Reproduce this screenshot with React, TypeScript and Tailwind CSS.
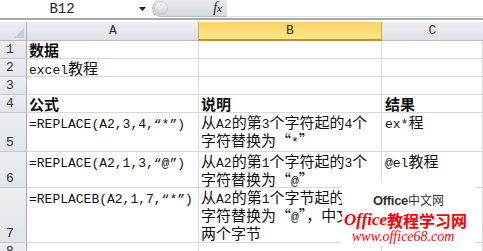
import React from "react";

const CJK = /([\u2E80-\u9FFF\u3000-\u303F\uFF00-\uFFEF\u201C\u201D]+)/;

// SimSun-like mix: half-width latin, full-width CJK
function Mix({ s, bold = false, mono = false }: { s: string; bold?: boolean; mono?: boolean }) {
  if (mono) return <span className="font-['Liberation_Mono',monospace] text-[13px] leading-none">{s}</span>;
  const parts = s.split(CJK).filter(Boolean);
  return (
    <>
      {parts.map((p, i) =>
        CJK.test(p) ? (
          <span
            key={i}
            className={
              "font-['Noto_Sans_CJK_SC',sans-serif] text-[15px] leading-none [font-feature-settings:'fwid'] " +
              (bold ? "font-bold" : "font-normal")
            }
          >
            {p}
          </span>
        ) : (
          <span key={i} className={"font-['Liberation_Mono',monospace] text-[13px] leading-none " + (bold ? "font-bold" : "")}>
            {p}
          </span>
        )
      )}
    </>
  );
}

type Row = { n: string; a?: string[]; b?: string[]; c?: string[]; bold?: boolean; monoA?: boolean };

const rows: Row[] = [
  { n: "1", a: ["数据"], bold: true },
  { n: "2", a: ["excel教程"] },
  { n: "3" },
  { n: "4", a: ["公式"], b: ["说明"], c: ["结果"], bold: true },
  { n: "5", a: ["=REPLACE(A2,3,4,“*”)"], b: ["从A2的第3个字符起的4个", "字符替换为“*”"], c: ["ex*程"], monoA: true },
  { n: "6", a: ["=REPLACE(A2,1,3,“@”)"], b: ["从A2的第1个字符起的3个", "字符替换为“@”"], c: ["@el教程"], monoA: true },
  { n: "7", a: ["=REPLACEB(A2,1,7,“*”)"], b: ["从A2的第1个字节起的7", "字符替换为“@”，中文占", "两个字节"], monoA: true },
  { n: "8" },
];

const cell = "border-r border-b border-[#d6d8da] bg-white pl-[2px] overflow-hidden text-[#111]";
const rowHead =
  "border-r border-b bg-gradient-to-b from-[#eceef1] to-[#e1e4e9] flex items-end pl-[6px] font-['Liberation_Mono',monospace] text-[13px] leading-[17px] text-[#333] overflow-hidden border-r-[#a7acb3] border-b-[#c5cad0]";

function Lines({ ls, bold, mono }: { ls?: string[]; bold?: boolean; mono?: boolean }) {
  return (
    <>
      {(ls || []).map((l, i) => (
        <div key={i} className="h-[18px] leading-[18px] text-[15px] font-['Noto_Sans_CJK_SC',sans-serif] whitespace-nowrap">
          <Mix s={l} bold={bold} mono={mono} />
        </div>
      ))}
    </>
  );
}

export default function App() {
  return (
    <div className="relative w-[483px] h-[251px] overflow-hidden bg-white flex flex-col">
      {/* formula bar */}
      <div className="h-[18px] flex items-start shrink-0">
        <div className="w-[124px] h-[18px] flex justify-center items-center font-['Liberation_Mono',monospace] text-[14px] text-[#222]">
          B12
        </div>
        <div className="w-[28px] h-[18px] flex items-center pl-[15px]">
          <svg width="7" height="4" viewBox="0 0 7 4">
            <polygon points="0,0 7,0 3.5,4" fill="#222" />
          </svg>
        </div>
        <div className="w-[75px] h-[17px] rounded-l-full bg-gradient-to-b from-[#e9ebee] to-[#d5d9de] border-l border-b border-[#b9bec5] flex items-center justify-between pr-[5px]">
          <div className="w-[14px] h-[14px] rounded-full bg-gradient-to-b from-[#f4f5f7] to-[#cfd3d8] border border-[#c4c8ce] ml-[1px] flex items-center justify-center">
            <div className="w-[6px] h-[2px] bg-[#e8eaed] rounded" />
          </div>
          <span className="font-['Liberation_Serif',serif] italic text-[14px] text-[#222] leading-none">
            f<span className="text-[11px]">x</span>
          </span>
        </div>
        <div className="flex-1 h-[17px] bg-white border-b border-[#e2e4e7]" />
      </div>
      <div className="h-[2px] bg-[#a3a9b1] shrink-0" />
      <div className="h-[2px] bg-white shrink-0" />

      {/* sheet */}
      <div className="grid grid-cols-[27px_172px_183px_1fr] grid-rows-[19px_18px_18px_18px_18px_39px_36px_55px_1fr] flex-1">
        {/* header row */}
        <div className="border-r border-b border-[#a7acb3] border-b-[#b8bdc3] bg-gradient-to-b from-[#eceef1] to-[#dfe2e7] relative">
          <svg className="absolute right-[2px] bottom-[2px]" width="10" height="10" viewBox="0 0 10 10">
            <polygon points="10,0 10,10 0,10" fill="#c9cdd3" />
          </svg>
        </div>
        <div className="border-b border-[#b8bdc3] bg-gradient-to-b from-[#eceef1] to-[#dfe2e7] flex items-center justify-center font-['Liberation_Mono',monospace] text-[13px] text-[#333]">
          A
        </div>
        <div className="border-l border-r border-[#e0a648] border-b-2 border-b-[#c78d3a] bg-gradient-to-b from-[#fbd168] to-[#ffe889] flex items-center justify-center font-['Liberation_Mono',monospace] text-[13px] text-[#333] -ml-[1px]">
          B
        </div>
        <div className="border-b border-[#b8bdc3] bg-gradient-to-b from-[#eceef1] to-[#dfe2e7] flex items-center justify-center font-['Liberation_Mono',monospace] text-[13px] text-[#333]">
          C
        </div>

        {rows.map((r) => (
          <React.Fragment key={r.n}>
            <div className={rowHead}>{r.n}</div>
            <div className={cell}>
              <Lines ls={r.a} bold={r.bold} mono={r.monoA} />
            </div>
            <div className={cell}>
              <Lines ls={r.b} bold={r.bold} />
            </div>
            <div className={cell + " pl-[3px]"}>
              <Lines ls={r.c} bold={r.bold} />
            </div>
          </React.Fragment>
        ))}
      </div>

      {/* pasted watermark image */}
      <div className="absolute left-[342px] top-[183px] w-[133px] h-[63px] bg-white flex flex-col items-center overflow-hidden">
        <div className="mt-[10px] h-[14px] flex items-center text-[#333] leading-none">
          <span className="font-['Liberation_Sans',sans-serif] font-bold text-[13px] tracking-[-0.3px]">Office</span>
          <span className="font-['Noto_Sans_CJK_SC',sans-serif] text-[12px]">中文网</span>
        </div>
        <div className="mt-[4px] self-start pl-[2px] h-[17px] flex items-center text-[#f00] leading-none italic font-bold">
          <span className="font-['Liberation_Serif',serif] text-[17px]">Office</span>
          <span className="font-['Noto_Sans_CJK_SC',sans-serif] text-[16px] not-italic">教程学习网</span>
        </div>
        <div className="mt-[2px] self-start pl-[10px] font-['Liberation_Serif',serif] italic text-[14px] leading-[14px] text-[#f00]">
          www.office68.com
        </div>
      </div>
    </div>
  );
}
